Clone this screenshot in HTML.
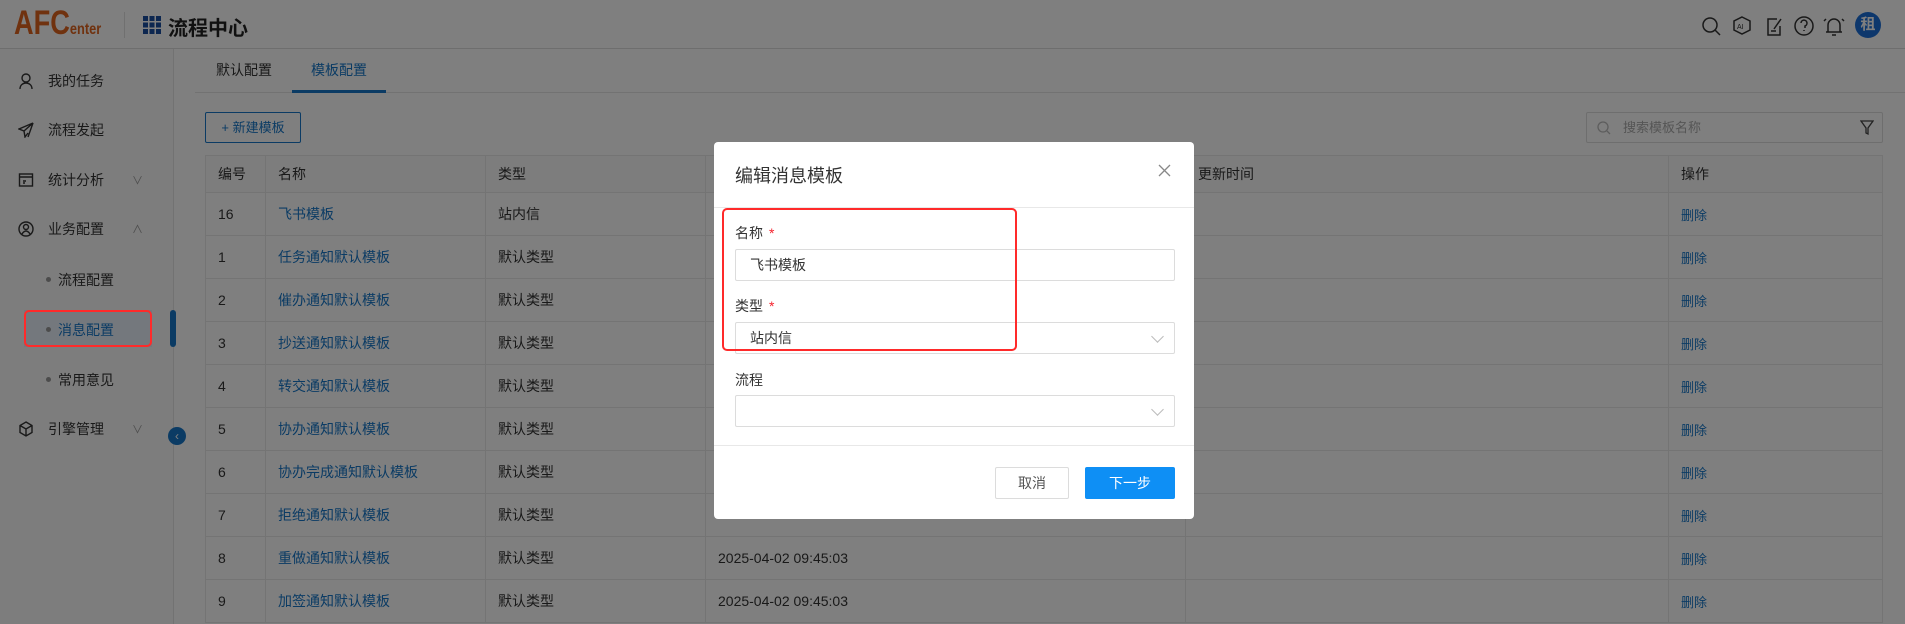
<!DOCTYPE html>
<html><head><meta charset="utf-8"><style>
*{box-sizing:border-box;margin:0;padding:0}
body{width:1905px;height:624px;overflow:hidden;position:relative;background:#fff;font-family:"Liberation Sans","Noto Sans CJK SC",sans-serif;font-size:14px;color:#333}
.abs{position:absolute}
.hdr{left:0;top:0;width:1905px;height:49px;background:#fff;border-bottom:1px solid #ddd}
.side{left:0;top:49px;width:174px;height:575px;background:#fafafa;border-right:1px solid #e4e4e4}
.mi{position:absolute;left:18px;font-size:14px;color:#333;display:flex;align-items:center}
.mi svg{margin-right:14px}
.sub{position:absolute;left:58px;font-size:14px;color:#333}
.sub:before{content:"";position:absolute;left:-12px;top:7px;width:5px;height:5px;border-radius:50%;background:#999}
.table{left:205px;top:155px;width:1678px;border-collapse:collapse;font-size:14px}
.table td,.table th{border:1px solid #e8e8e8;height:43px;padding-left:12px;text-align:left;font-weight:normal}
.table th{height:37px;background:#fafafa}
.lk{color:#1677c9}
.ov{left:0;top:0;width:1905px;height:624px;background:rgba(0,0,0,.5)}
.modal{left:714px;top:142px;width:480px;height:377px;background:#fff;border-radius:4px}
.inp{position:absolute;left:21px;width:440px;height:32px;border:1px solid #dcdcdc;border-radius:2px;padding-left:14px;line-height:30px;font-size:14px;color:#333}
.lbl{position:absolute;left:21px;font-size:14px;color:#333}
.lbl i{color:#f5222d;font-style:normal;margin-left:6px}
.chev{position:absolute;right:12px;top:9px;width:9px;height:9px;border-right:1px solid #bbb;border-bottom:1px solid #bbb;transform:rotate(45deg)}
</style></head><body>
<div class="abs hdr">
 <div class="abs" style="left:14px;top:4px;font-size:34px;font-weight:bold;color:#e0641f;transform:scaleX(0.8);transform-origin:left top;white-space:nowrap">AFC<span style="font-size:16px">enter</span></div>
 <div class="abs" style="left:124px;top:12px;width:1px;height:26px;background:#e0e0e0"></div>
 <svg class="abs" style="left:143px;top:16px" width="18" height="18" viewBox="0 0 18 18" fill="#1a4fa0"><rect x="0" y="0" width="5" height="5"/><rect x="6.5" y="0" width="5" height="5"/><rect x="13" y="0" width="5" height="5"/><rect x="0" y="6.5" width="5" height="5"/><rect x="6.5" y="6.5" width="5" height="5"/><rect x="13" y="6.5" width="5" height="5"/><rect x="0" y="13" width="5" height="5"/><rect x="6.5" y="13" width="5" height="5"/><rect x="13" y="13" width="5" height="5"/></svg>
 <div class="abs" style="left:168px;top:12px;font-size:20px;font-weight:bold;color:#222">流程中心</div>
 <svg class="abs" style="left:1701px;top:15px" width="160" height="22" viewBox="0 0 160 22" fill="none" stroke="#333" stroke-width="1.5">
  <circle cx="9" cy="10" r="7"/><path d="M14 15l5 5"/>
  <path d="M41 2l8 4v9l-8 4-8-4V6z"/><text x="36" y="14" font-size="7" fill="#333" stroke="none" font-family="Liberation Sans">AI</text>
  <path d="M76 4h-9v16h12v-9M73 14l7-10"/><path d="M70 16h5"/>
  <circle cx="103" cy="11" r="9"/><path d="M100 8a3 3 0 1 1 4 3v2M103 15v1"/>
  <path d="M127 17V10a6 6 0 0 1 12 0v7zM125 17h16M131 20h4M123 6l2-2M143 6l-2-2"/>
 </svg>
 <div class="abs" style="left:1855px;top:12px;width:26px;height:26px;border-radius:50%;background:#1a6fd9;color:#fff;font-weight:bold;font-size:15px;text-align:center;line-height:26px">租</div>
</div>
<div class="abs side">
 <div class="mi" style="top:22px"><svg width="16" height="16" viewBox="0 0 16 16" fill="none" stroke="#333" stroke-width="1.4"><circle cx="8" cy="5" r="4"/><path d="M2 16c0-4 3-6 6-6s6 2 6 6"/></svg>我的任务</div>
 <div class="mi" style="top:71px"><svg width="16" height="16" viewBox="0 0 16 16" fill="none" stroke="#333" stroke-width="1.4"><path d="M15 1L1 7l5 2 1 6 3-4M6 9l9-8-5 14"/></svg>流程发起</div>
 <div class="mi" style="top:121px"><svg width="16" height="16" viewBox="0 0 16 16" fill="none" stroke="#333" stroke-width="1.4"><rect x="1.5" y="2" width="13" height="12"/><path d="M1.5 5h13M5 9h3M5 11h2"/></svg>统计分析<span style="margin-left:28px;color:#999;font-size:11px">∨</span></div>
 <div class="mi" style="top:170px"><svg width="16" height="16" viewBox="0 0 16 16" fill="none" stroke="#333" stroke-width="1.4"><circle cx="8" cy="8" r="7"/><circle cx="8" cy="6" r="2.5"/><path d="M4 13c1-2 3-3 4-3s3 1 4 3"/></svg>业务配置<span style="margin-left:28px;color:#999;font-size:11px">∧</span></div>
 <div class="sub" style="top:221px">流程配置</div>
 <div class="abs" style="left:24px;top:261px;width:128px;height:37px;background:#e8f1fb"></div>
 <div class="sub" style="top:271px;color:#1677c9">消息配置</div>
 <div class="sub" style="top:321px">常用意见</div>
 <div class="mi" style="top:370px"><svg width="16" height="16" viewBox="0 0 16 16" fill="none" stroke="#333" stroke-width="1.4"><path d="M8 1l6 3.5v7L8 15l-6-3.5v-7zM2 4.5L8 8l6-3.5M8 8v7"/></svg>引擎管理<span style="margin-left:28px;color:#999;font-size:11px">∨</span></div>
 <div class="abs" style="left:170px;top:261px;width:6px;height:37px;background:#1677c9;border-radius:3px"></div>
</div>
<div class="abs" style="left:168px;top:427px;width:18px;height:18px;border-radius:50%;background:#1677c9;color:#fff;font-size:12px;text-align:center;line-height:18px">‹</div>
<div class="abs" style="left:216px;top:60px;font-size:14px">默认配置</div>
<div class="abs" style="left:311px;top:60px;font-size:14px;color:#1677c9">模板配置</div>
<div class="abs" style="left:195px;top:92px;width:1710px;height:1px;background:#e4e4e4"></div>
<div class="abs" style="left:292px;top:90px;width:94px;height:3px;background:#1677c9"></div>
<div class="abs" style="left:205px;top:112px;width:96px;height:31px;border:1px solid #1677c9;border-radius:2px;color:#1677c9;font-size:13px;text-align:center;line-height:29px">+ 新建模板</div>
<div class="abs" style="left:1586px;top:112px;width:297px;height:31px;border:1px solid #ddd;border-radius:2px;color:#aaa;font-size:13px;line-height:29px;padding-left:36px">搜索模板名称
 <svg class="abs" style="left:10px;top:8px" width="14" height="14" viewBox="0 0 14 14" fill="none" stroke="#bbb" stroke-width="1.3"><circle cx="6" cy="6" r="5"/><path d="M10 10l3 3"/></svg>
 <svg class="abs" style="right:8px;top:7px" width="14" height="16" viewBox="0 0 14 16" fill="none" stroke="#444" stroke-width="1.3"><path d="M1 1h12L8 8v6l-2-1V8z"/></svg></div>
<table class="abs table">
<tr><th style="width:60px">编号</th><th style="width:220px">名称</th><th style="width:220px">类型</th><th style="width:480px">创建时间</th><th style="width:483px">更新时间</th><th>操作</th></tr>
<tr><td>16</td><td class="lk">飞书模板</td><td>站内信</td><td></td><td></td><td class="lk" style="font-size:13px">删除</td></tr>
<tr><td>1</td><td class="lk">任务通知默认模板</td><td>默认类型</td><td></td><td></td><td class="lk" style="font-size:13px">删除</td></tr>
<tr><td>2</td><td class="lk">催办通知默认模板</td><td>默认类型</td><td></td><td></td><td class="lk" style="font-size:13px">删除</td></tr>
<tr><td>3</td><td class="lk">抄送通知默认模板</td><td>默认类型</td><td></td><td></td><td class="lk" style="font-size:13px">删除</td></tr>
<tr><td>4</td><td class="lk">转交通知默认模板</td><td>默认类型</td><td></td><td></td><td class="lk" style="font-size:13px">删除</td></tr>
<tr><td>5</td><td class="lk">协办通知默认模板</td><td>默认类型</td><td></td><td></td><td class="lk" style="font-size:13px">删除</td></tr>
<tr><td>6</td><td class="lk">协办完成通知默认模板</td><td>默认类型</td><td></td><td></td><td class="lk" style="font-size:13px">删除</td></tr>
<tr><td>7</td><td class="lk">拒绝通知默认模板</td><td>默认类型</td><td></td><td></td><td class="lk" style="font-size:13px">删除</td></tr>
<tr><td>8</td><td class="lk">重做通知默认模板</td><td>默认类型</td><td>2025-04-02 09:45:03</td><td></td><td class="lk" style="font-size:13px">删除</td></tr>
<tr><td>9</td><td class="lk">加签通知默认模板</td><td>默认类型</td><td>2025-04-02 09:45:03</td><td></td><td class="lk" style="font-size:13px">删除</td></tr>
</table>
<div class="abs ov"></div>
<div class="abs" style="left:24px;top:310px;width:128px;height:37px;border:2px solid #ff2a2a;border-radius:5px"></div>
<div class="abs modal">
 <div class="abs" style="left:21px;top:20px;font-size:18px;color:#333">编辑消息模板</div>
 <svg class="abs" style="left:444px;top:22px" width="13" height="13" viewBox="0 0 13 13" stroke="#888" stroke-width="1.3"><path d="M1 1l11 11M12 1L1 12"/></svg>
 <div class="abs" style="left:0;top:65px;width:480px;height:1px;background:#e8e8e8"></div>
 <div class="lbl" style="top:81px">名称<i>*</i></div>
 <div class="inp" style="top:107px">飞书模板</div>
 <div class="lbl" style="top:154px">类型<i>*</i></div>
 <div class="inp" style="top:180px">站内信<span class="chev"></span></div>
 <div class="lbl" style="top:228px">流程</div>
 <div class="inp" style="top:253px"><span class="chev"></span></div>
 <div class="abs" style="left:0;top:303px;width:480px;height:1px;background:#e8e8e8"></div>
 <div class="abs" style="left:281px;top:325px;width:74px;height:32px;border:1px solid #dcdcdc;border-radius:2px;text-align:center;line-height:30px;font-size:14px;color:#555">取消</div>
 <div class="abs" style="left:371px;top:325px;width:90px;height:32px;background:#0e8ff5;border-radius:2px;text-align:center;line-height:32px;font-size:14px;color:#fff">下一步</div>
</div>
<div class="abs" style="left:722px;top:208px;width:295px;height:143px;border:2px solid #ff2a2a;border-radius:5px"></div>
</body></html>
